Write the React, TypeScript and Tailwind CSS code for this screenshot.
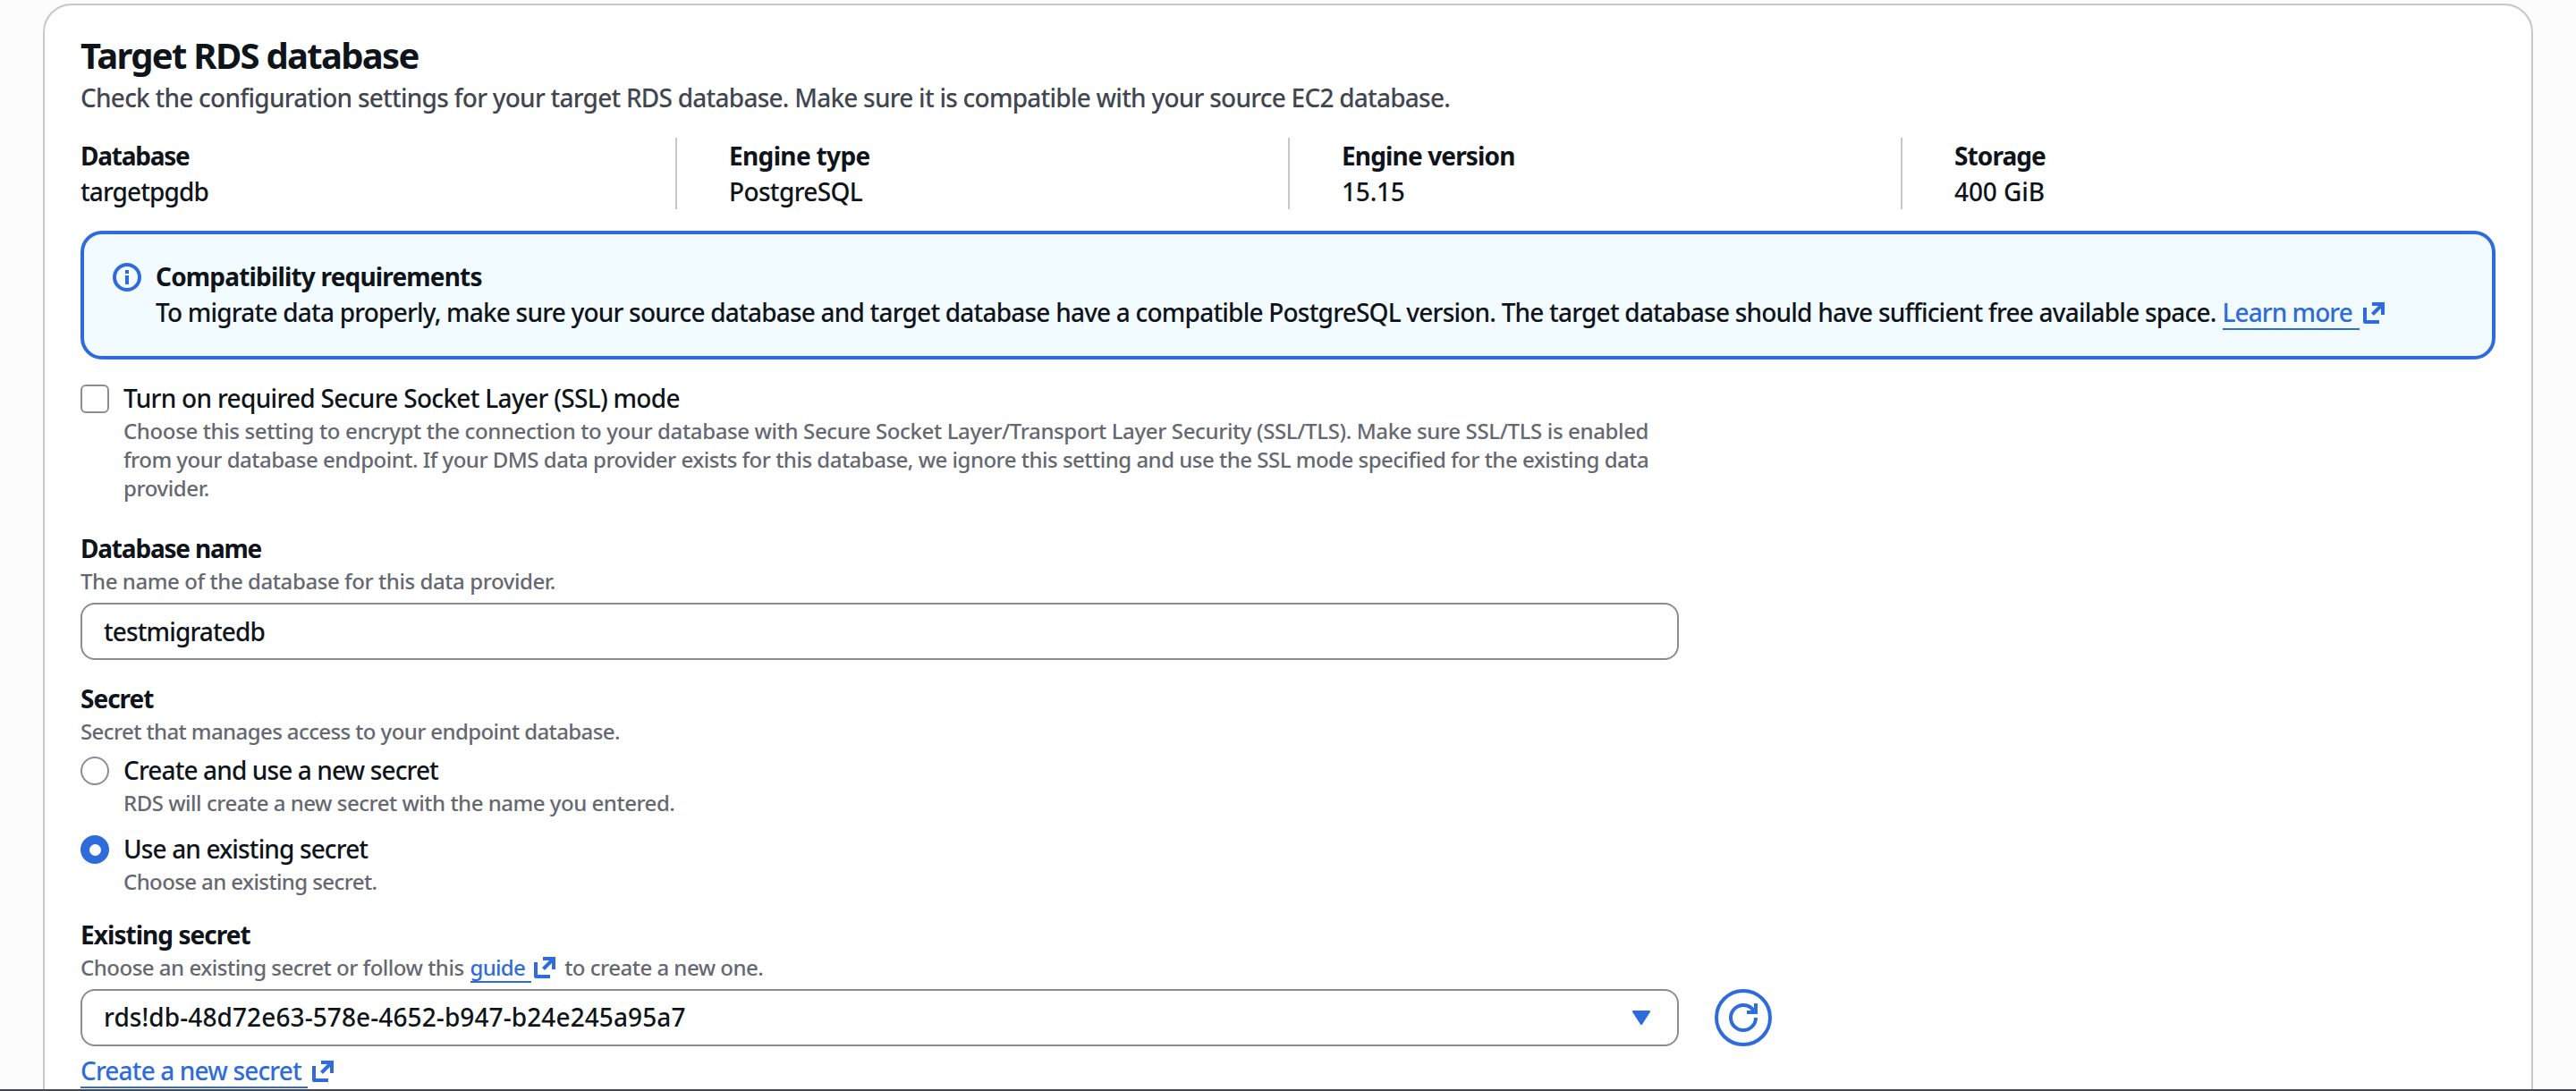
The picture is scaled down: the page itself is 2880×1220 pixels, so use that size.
import React from 'react';

const ExternalIcon = ({ className }: { className: string }) => (
  <svg viewBox="0 0 24 24" className={`w-6 h-6 shrink-0 ${className}`} fill="none" stroke="currentColor" strokeWidth="4">
    <path d="M2 6v16h16" strokeLinejoin="round" />
    <path d="M10 2h12v12" />
    <path d="M22 2L10.5 13.5" />
  </svg>
);

const InfoIcon = () => (
  <svg viewBox="0 0 32 32" className="w-8 h-8 mt-[5px] shrink-0 text-[#2e6bdb]" fill="none" stroke="currentColor" strokeWidth="4">
    <circle cx="16" cy="16" r="14" />
    <path d="M16 8v4M16 14v10" />
  </svg>
);

const RefreshIcon = () => (
  <svg viewBox="0 0 32 32" className="w-8 h-8" fill="none" stroke="currentColor" strokeWidth="4">
    <path d="M30 16c0 7.73-6.27 14-14 14S2 23.73 2 16 8.27 2 16 2c5.58 0 10.4 3.26 12.66 8" />
    <path d="M20 10h10V0" />
  </svg>
);

const Hint = ({ children, className = '' }: { children: React.ReactNode; className?: string }) => (
  <p className={`text-[24px] leading-8 text-[#656871] whitespace-nowrap ${className}`}>{children}</p>
);

const Label = ({ children, className }: { children: React.ReactNode; className: string }) => (
  <h3 className={`font-bold ${className}`}>{children}</h3>
);

const Radio = ({ checked, label, hint, labelClass, hintClass }: {
  checked?: boolean;
  label: string;
  hint: string;
  labelClass: string;
  hintClass: string;
}) => (
  <div className="flex gap-4">
    <span
      className={
        checked
          ? 'flex items-center justify-center w-8 h-8 mt-[5px] shrink-0 rounded-full bg-[#2e6bdb]'
          : 'w-8 h-8 mt-[5px] shrink-0 rounded-full border-2 border-[#8c8c94]'
      }
    >
      {checked && <span className="w-[13px] h-[13px] rounded-full bg-white" />}
    </span>
    <div>
      <p className={`whitespace-nowrap ${labelClass}`}>{label}</p>
      <Hint className={`mt-px ${hintClass}`}>{hint}</Hint>
    </div>
  </div>
);

const details = [
  { label: 'Database', value: 'targetpgdb', labelClass: 'tracking-[-1.25px]', valueClass: 'tracking-[-0.9px]' },
  { label: 'Engine type', value: 'PostgreSQL', labelClass: 'tracking-[-0.65px]', valueClass: 'tracking-[-0.65px]' },
  { label: 'Engine version', value: '15.15', labelClass: 'tracking-[-0.85px]', valueClass: 'tracking-[-0.2px]' },
  { label: 'Storage', value: '400 GiB', labelClass: 'tracking-[-0.9px]', valueClass: 'tracking-[-0.1px]' },
];

const App = () => (
  <div className="flex flex-col w-[2880px] h-[1220px] overflow-hidden bg-[#fcfcfc] text-[28px] leading-10 font-medium text-[#0f141a] font-['Noto_Sans',sans-serif]">
    <main className="flex-1 min-h-0 overflow-hidden pt-1 px-12">
      <section className="h-[1260px] rounded-[32px] border-2 border-[#c6c6cd] bg-white pt-8 px-10">
        <header>
          <h2 className="text-[40px] leading-12 font-bold tracking-[-1.7px]">Target RDS database</h2>
          <p className="mt-[3px] text-[#424650] tracking-[-0.76px] whitespace-nowrap">
            Check the configuration settings for your target RDS database. Make sure it is compatible with your source EC2 database.
          </p>
        </header>

        <div className="flex mt-[25px] h-20">
          {details.map((item, index) => (
            <div
              key={item.label}
              className={index === 0 ? 'w-[665px] shrink-0' : 'w-[685px] shrink-0 border-l-2 border-[#c6c6cd] pl-[58px] last:w-auto'}
            >
              <Label className={item.labelClass}>{item.label}</Label>
              <p className={item.valueClass}>{item.value}</p>
            </div>
          ))}
        </div>

        <div className="flex gap-4 mt-6 h-36 rounded-3xl border-4 border-[#2e6bdb] bg-[#f2fbff] pt-[27px] pl-8">
          <InfoIcon />
          <div>
            <Label className="tracking-[-0.82px]">Compatibility requirements</Label>
            <div className="flex whitespace-nowrap">
              <p className="tracking-[-0.79px]">
                To migrate data properly, make sure your source database and target database have a compatible PostgreSQL version. The target database should have sufficient free available space.
              </p>
              <a className="flex ml-[7px] text-[#2e6bdb]">
                <span className="h-10 pr-2 border-b-2 border-[#2e6bdb] tracking-[-0.95px]">Learn more</span>
                <ExternalIcon className="ml-1 mt-[9px]" />
              </a>
            </div>
          </div>
        </div>

        <div className="flex gap-4 mt-[23px]">
          <span className="w-8 h-8 mt-[5px] shrink-0 rounded-md border-2 border-[#8c8c94]" />
          <div>
            <p className="tracking-[-0.69px]">Turn on required Secure Socket Layer (SSL) mode</p>
            <Hint className="mt-px tracking-[-0.37px]">
              Choose this setting to encrypt the connection to your database with Secure Socket Layer/Transport Layer Security (SSL/TLS). Make sure SSL/TLS is enabled
            </Hint>
            <Hint className="tracking-[-0.5px]">
              from your database endpoint. If your DMS data provider exists for this database, we ignore this setting and use the SSL mode specified for the existing data
            </Hint>
            <Hint className="tracking-[-0.4px]">provider.</Hint>
          </div>
        </div>

        <div className="w-[1787px] mt-[31px]">
          <Label className="tracking-[-1.2px]">Database name</Label>
          <Hint className="mt-px tracking-[-0.42px]">The name of the database for this data provider.</Hint>
          <div className="flex items-center h-16 mt-2 rounded-2xl border-2 border-[#8c8c94] px-6 tracking-[-0.88px]">
            testmigratedb
          </div>
        </div>

        <div className="mt-[23px]">
          <Label className="tracking-[-1px]">Secret</Label>
          <Hint className="mt-px tracking-[-0.6px]">Secret that manages access to your endpoint database.</Hint>
          <div className="flex flex-col gap-[15px] mt-[7px]">
            <Radio
              label="Create and use a new secret"
              hint="RDS will create a new secret with the name you entered."
              labelClass="tracking-[-0.88px]"
              hintClass="tracking-[-0.48px]"
            />
            <Radio
              checked
              label="Use an existing secret"
              hint="Choose an existing secret."
              labelClass="tracking-[-0.87px]"
              hintClass="tracking-[-0.6px]"
            />
          </div>
        </div>

        <div className="mt-[23px]">
          <Label className="tracking-[-0.95px]">Existing secret</Label>
          <div className="flex h-8 mt-px">
            <Hint className="tracking-[-0.49px]">Choose an existing secret or follow this</Hint>
            <a className="flex ml-[7px] text-[24px] leading-8 text-[#2e6bdb]">
              <span className="h-[33px] pr-[7px] border-b-2 border-[#2e6bdb] tracking-[-0.7px]">guide</span>
              <ExternalIcon className="ml-[3px] mt-1" />
            </a>
            <Hint className="ml-2.5 tracking-[-0.5px]">to create a new one.</Hint>
          </div>
          <div className="flex gap-10 mt-2">
            <div className="flex items-center justify-between w-[1787px] h-16 rounded-2xl border-2 border-[#8c8c94] pl-6 pr-[30px]">
              <span className="-mt-0.5 tracking-[0.1px]">rds!db-48d72e63-578e-4652-b947-b24e245a95a7</span>
              <svg viewBox="0 0 20 16" className="w-5 h-4 text-[#2e6bdb]" fill="currentColor">
                <path d="M1.2 0h17.6c1 0 1.5 1.1.9 1.9L11 15.4c-.5.8-1.5.8-2 0L.3 1.9C-.3 1.1.2 0 1.2 0z" />
              </svg>
            </div>
            <button className="flex items-center justify-center w-16 h-16 rounded-full border-4 border-[#2e6bdb] text-[#2e6bdb]">
              <RefreshIcon />
            </button>
          </div>
          <a className="flex mt-[7px] text-[#2e6bdb]">
            <span className="h-10 pr-[7px] border-b-2 border-[#2e6bdb] tracking-[-0.85px]">Create a new secret</span>
            <ExternalIcon className="ml-[5px] mt-[9px]" />
          </a>
        </div>
      </section>
    </main>
    <div className="h-0.5 shrink-0 bg-[#424650]" />
  </div>
);

export default App;
